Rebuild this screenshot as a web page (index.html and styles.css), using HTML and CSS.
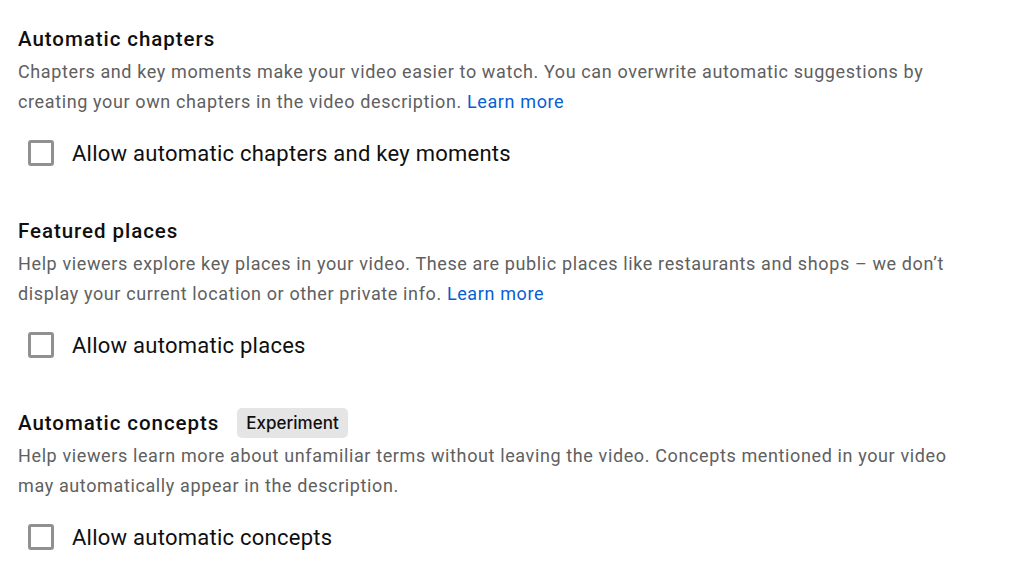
FILE: index.html
```html
<!DOCTYPE html>
<html lang="en">
<head>
<meta charset="utf-8">
<title>Settings</title>
<link rel="stylesheet" href="styles.css">
</head>
<body>
<main class="page">
  <section class="setting">
    <h2 class="title">Automatic chapters</h2>
    <p class="desc">Chapters and key moments make your video easier to watch. You can overwrite automatic suggestions by creating your own chapters in the video description. <a class="link" href="#">Learn more</a></p>
    <label class="check-row"><span class="box"></span><span class="label">Allow automatic chapters and key moments</span></label>
  </section>
  <section class="setting">
    <h2 class="title">Featured places</h2>
    <p class="desc">Help viewers explore key places in your video. These are public places like restaurants and shops – we don’t display your current location or other private info. <a class="link" href="#">Learn more</a></p>
    <label class="check-row"><span class="box"></span><span class="label">Allow automatic places</span></label>
  </section>
  <section class="setting">
    <h2 class="title">Automatic concepts <span class="badge">Experiment</span></h2>
    <p class="desc">Help viewers learn more about unfamiliar terms without leaving the video. Concepts mentioned in your video may automatically appear in the description.</p>
    <label class="check-row"><span class="box"></span><span class="label">Allow automatic concepts</span></label>
  </section>
</main>
</body>
</html>
```
FILE: styles.css
```css
html, body {
  margin: 0;
  padding: 0;
  background: #ffffff;
}
body {
  font-family: Roboto, "Liberation Sans", Arial, sans-serif;
  color: #0f0f0f;
}
.page {
  display: flex;
  flex-direction: column;
  gap: 44px;
  padding: 25px 20px 0 18px;
}
.setting {
  display: flex;
  flex-direction: column;
}
.title {
  margin: 0;
  font-size: 20.5px;
  font-weight: 500;
  letter-spacing: 0.95px;
  line-height: 28px;
  height: 28px;
  display: flex;
  align-items: center;
  gap: 18px;
}
.badge {
  display: inline-flex;
  align-items: center;
  height: 30px;
  padding: 0 9px;
  border-radius: 5px;
  background: #e5e5e5;
  font-family: Inter, Roboto, sans-serif;
  font-size: 17px;
  font-weight: 500;
  letter-spacing: 0;
  color: #0f0f0f;
}
.desc {
  margin: 4px 0 0;
  font-size: 18px;
  letter-spacing: 0.62px;
  line-height: 30px;
  color: #606060;
  max-width: 955px;
}
.link {
  color: #065fd4;
  text-decoration: none;
}
.check-row {
  display: flex;
  align-items: center;
  gap: 18px;
  height: 40px;
  margin-top: 16px;
  padding-left: 10px;
}
.box {
  width: 20px;
  height: 20px;
  border: 3px solid #909090;
  border-radius: 3px;
  flex: none;
}
.label {
  font-size: 22px;
  letter-spacing: 0.25px;
  color: #0f0f0f;
}
```
